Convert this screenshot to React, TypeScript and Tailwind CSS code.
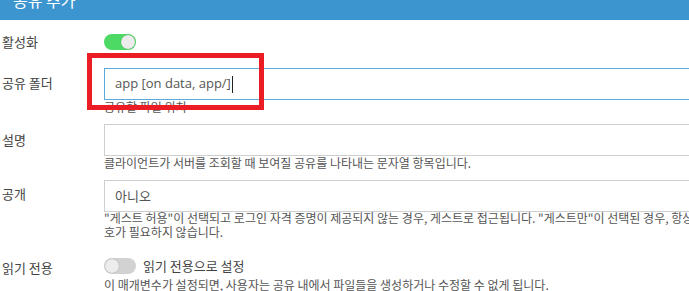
import React from "react";

const KR = { fontFamily: '"Noto Sans CJK KR", "Noto Sans", sans-serif' };

function Toggle({ on }: { on: boolean }) {
  return (
    <div
      className={`flex h-[16px] w-[32px] items-center rounded-full px-[1px] ${
        on ? "justify-end bg-[#4cd964]" : "justify-start bg-[#d2d2d2]"
      }`}
    >
      <div className="h-[14px] w-[14px] rounded-full bg-[#ececec] shadow-[0_0_1px_rgba(0,0,0,0.35)]" />
    </div>
  );
}

function Row({
  label,
  labelTop,
  height,
  children,
}: {
  label: string;
  labelTop: number;
  height: number;
  children: React.ReactNode;
}) {
  return (
    <div className="flex" style={{ height }}>
      <div className="w-[104px] shrink-0 pl-[2px] text-[13px] leading-[20px] text-[#444]" style={{ paddingTop: labelTop }}>
        {label}
      </div>
      <div className="flex-1">{children}</div>
    </div>
  );
}

const hint = "text-[12px] leading-[14px] text-[#555]";

export default function App() {
  return (
    <div className="relative h-[291px] w-[689px] overflow-hidden bg-white" style={KR}>
      <div className="h-[20px] overflow-hidden bg-[#3d95cf] pl-[13px]">
        <div className="-mt-[12px] text-[16px] leading-[24px] text-white">공유 추가</div>
      </div>

      <div className="w-[760px]">
        <Row label="활성화" labelTop={12} height={48}>
          <div className="pt-[14px]">
            <Toggle on />
          </div>
        </Row>

        <Row label="공유 폴더" labelTop={5} height={56}>
          <div className="flex h-[32px] items-center border border-[#5aaade] pl-[10px] text-[13px] text-[#555]">
            <span style={{ fontFamily: '"Open Sans", sans-serif' }}>app [on data, app/]</span>
            <span className="ml-[1px] h-[17px] w-[1px] bg-[#222]" />
          </div>
          <div className={hint}>공유할 파일 위치</div>
        </Row>

        <Row label="설명" labelTop={6} height={56}>
          <div className="h-[32px] border border-[#cfcfcf]" />
          <div className={hint}>클라이언트가 서버를 조회할 때 보여질 공유를 나타내는 문자열 항목입니다.</div>
        </Row>

        <Row label="공개" labelTop={4} height={78}>
          <div className="flex h-[32px] items-center border border-[#cfcfcf] pl-[10px] text-[13px] text-[#555]">
            아니오
          </div>
          <div className="-mt-[1px] whitespace-nowrap text-[12px] leading-[14px] text-[#555]">
            "게스트 허용"이 선택되고 로그인 자격 증명이 제공되지 않는 경우, 게스트로 접근됩니다. "게스트만"이 선택된 경우, 항상 암
            <br />
            호가 필요하지 않습니다.
          </div>
        </Row>

        <Row label="읽기 전용" labelTop={0} height={33}>
          <div className="flex h-[16px] items-center gap-[7px]">
            <Toggle on={false} />
            <span className="text-[13px] leading-[16px] text-[#444]">읽기 전용으로 설정</span>
          </div>
          <div className={`mt-[4px] ${hint}`}>
            이 매개변수가 설정되면, 사용자는 공유 내에서 파일들을 생성하거나 수정할 수 없게 됩니다.
          </div>
        </Row>
      </div>

      <div className="pointer-events-none absolute left-[87px] top-[53px] h-[57px] w-[177px] border-[5px] border-[#ec1c24]" />
    </div>
  );
}
